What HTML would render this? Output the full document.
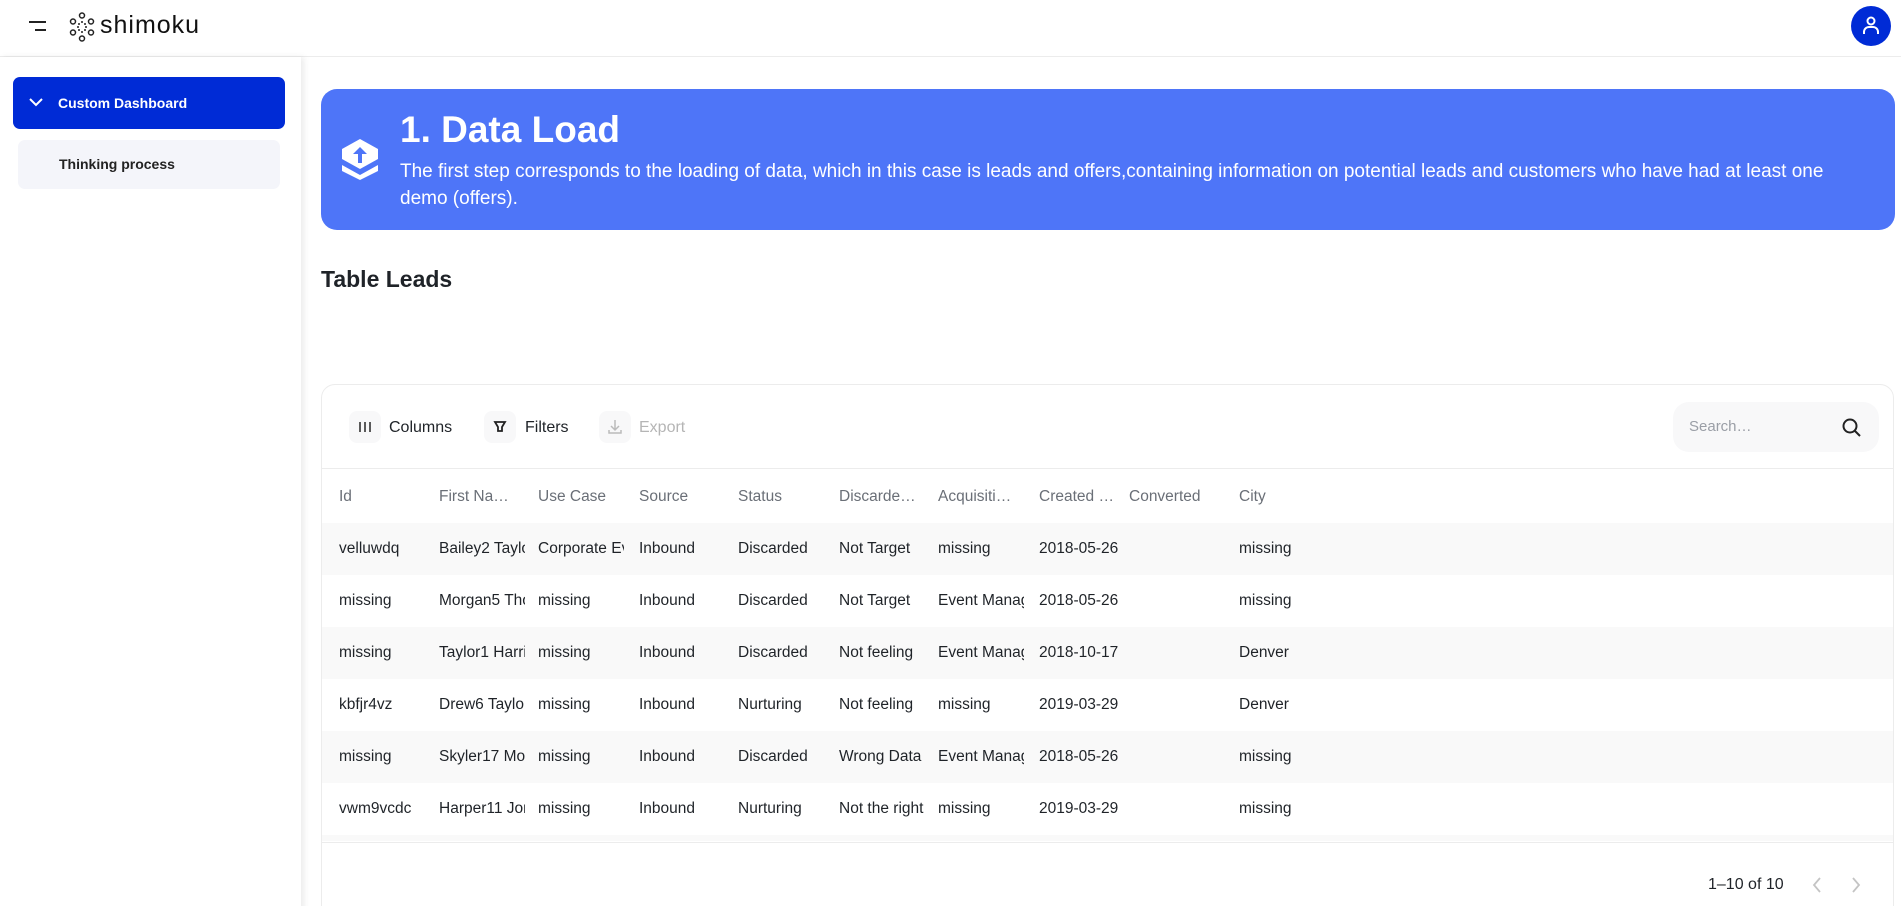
<!DOCTYPE html>
<html><head><meta charset="utf-8"><style>
*{margin:0;padding:0;box-sizing:border-box}
html,body{width:1901px;height:906px;overflow:hidden}
body{background:#fff;font-family:"Liberation Sans",sans-serif;color:#1f2328;position:relative}
.a{position:absolute}
.hdr{left:0;top:0;width:1901px;height:57px;border-bottom:1px solid #ececec;background:#fff}
.side{left:0;top:57px;width:301px;height:860px;background:#fff;box-shadow:3px 0 6px rgba(0,0,0,0.08)}
.cd{left:13px;top:77px;width:272px;height:52px;background:#002bd6;border-radius:7px;color:#fff;font-weight:bold;font-size:14px}
.tp{left:18px;top:140px;width:262px;height:49px;background:#f4f5fa;border-radius:7px;font-weight:bold;font-size:14px;color:#222}
.ban{left:321px;top:89px;width:1574px;height:141px;background:#4e75f8;border-radius:16px;color:#fff}
.card{left:321px;top:384px;width:1573px;height:540px;border:1px solid #ececec;border-radius:14px;background:#fff;overflow:hidden}
.ib{width:32px;height:32px;background:#f8f8f9;border-radius:8px;top:26px}
.tl{font-size:16px;top:34px;color:#1f2328}
.row{left:0;width:1573px;height:52px}
.row span{position:absolute;top:17px;font-size:15.5px;white-space:nowrap;overflow:hidden}
.g{background:#f9f9f9}
</style></head><body>
<div class="a hdr">
 <div class="a" style="left:29px;top:21px;width:17px;height:2px;background:#222"></div>
 <div class="a" style="left:35px;top:29px;width:11px;height:2px;background:#222"></div>
 <svg class="a" style="left:68px;top:12px" width="30" height="30" viewBox="0 0 30 30" fill="none" stroke="#222" stroke-width="1.5">
  <circle cx="14" cy="3.5" r="2.5"/><circle cx="14" cy="26.5" r="2.5"/><circle cx="5" cy="9.5" r="2.5"/><circle cx="5" cy="20.5" r="2.5"/><circle cx="23" cy="9.5" r="2.5"/><circle cx="23" cy="20.5" r="2.5"/>
  <g fill="#222" stroke="none"><circle cx="11" cy="12" r="1"/><circle cx="17" cy="12" r="1"/><circle cx="11" cy="18" r="1"/><circle cx="17" cy="18" r="1"/><circle cx="14" cy="10" r="1"/><circle cx="14" cy="20" r="1"/><circle cx="10" cy="15" r="1"/><circle cx="18" cy="15" r="1"/></g>
 </svg>
 <div class="a" style="left:100px;top:11px;font-size:25px;color:#111;letter-spacing:1px">shimoku</div>
 <div class="a" style="left:1851px;top:6px;width:40px;height:40px;border-radius:50%;background:#002bd6">
  <svg width="40" height="40" viewBox="0 0 40 40" fill="none" stroke="#fff" stroke-width="2"><circle cx="20" cy="15" r="3.5"/><path d="M13 28v-2a5 5 0 0 1 5-5h4a5 5 0 0 1 5 5v2"/></svg>
 </div>
</div>
<div class="a side"></div>
<div class="a cd"><svg class="a" style="left:16px;top:20px" width="14" height="10" viewBox="0 0 14 10" fill="none" stroke="#fff" stroke-width="2"><path d="M1 2l6 6 6-6"/></svg><span class="a" style="left:45px;top:18px">Custom Dashboard</span></div>
<div class="a tp"><span class="a" style="left:41px;top:16px">Thinking process</span></div>
<div class="a ban">
 <svg class="a" style="left:20px;top:50px" width="38" height="41" viewBox="0 0 38 41"><path fill="#fff" d="M19 0L37 10v10L19 30 1 20V10z"/><path fill="#fff" d="M1 26l18 10 18-10v6L19 41 1 32z"/><path d="M19 8l-7 7h5v9h4v-9h5z" fill="#4e75f8"/></svg>
 <div class="a" style="left:79px;top:20px;font-size:37px;font-weight:bold">1. Data Load</div>
 <div class="a" style="left:79px;top:69px;width:1450px;font-size:19px;line-height:27px">The first step corresponds to the loading of data, which in this case is leads and offers,containing information on potential leads and customers who have had at least one demo (offers).</div>
</div>
<div class="a" style="left:321px;top:266px;font-size:23px;font-weight:bold;color:#1f2328">Table Leads</div>
<div class="a card">
 <div class="a ib" style="left:27px"><svg width="32" height="32"><g stroke="#333" stroke-width="1.6"><path d="M11 11v10M16 11v10M21 11v10"/></g></svg></div>
 <div class="a tl" style="left:67px">Columns</div>
 <div class="a ib" style="left:162px"><svg width="32" height="32" fill="none" stroke="#222" stroke-width="1.8"><path d="M11 11h10l-3 5v4h-4v-4z"/></svg></div>
 <div class="a tl" style="left:203px">Filters</div>
 <div class="a ib" style="left:277px"><svg width="32" height="32" fill="none" stroke="#bbb" stroke-width="1.5"><path d="M16 9v10M12 15l4 4 4-4M10 19v3h12v-3"/></svg></div>
 <div class="a tl" style="left:317px;color:#b5b5b5">Export</div>
 <div class="a" style="left:1351px;top:17px;width:206px;height:50px;background:#f8f8f9;border-radius:16px">
  <span class="a" style="left:16px;top:16px;font-size:15px;color:#9a9ea6">Search…</span>
  <svg class="a" style="left:168px;top:15px" width="22" height="22" fill="none" stroke="#222" stroke-width="2"><circle cx="9" cy="9" r="6.5"/><path d="M14 14l5 5"/></svg>
 </div>
 <div class="a" style="left:0;top:83px;width:1573px;height:1px;background:#ececec"></div>
 <div class="a row" style="top:86px;color:#6a6f77"><span style="left:17px">Id</span><span style="left:117px">First Na…</span><span style="left:216px">Use Case</span><span style="left:317px">Source</span><span style="left:416px">Status</span><span style="left:517px">Discarde…</span><span style="left:616px">Acquisiti…</span><span style="left:717px">Created …</span><span style="left:807px">Converted</span><span style="left:917px">City</span></div>
 <div class="a row g" style="top:138px"><span style="left:17px">velluwdq</span><span style="left:117px;width:86px">Bailey2 Taylor</span><span style="left:216px;width:86px">Corporate Events</span><span style="left:317px">Inbound</span><span style="left:416px">Discarded</span><span style="left:517px;width:86px">Not Target</span><span style="left:616px">missing</span><span style="left:717px;width:86px">2018-05-26</span><span style="left:917px">missing</span></div>
 <div class="a row" style="top:190px"><span style="left:17px">missing</span><span style="left:117px;width:86px">Morgan5 Thomas</span><span style="left:216px">missing</span><span style="left:317px">Inbound</span><span style="left:416px">Discarded</span><span style="left:517px;width:86px">Not Target</span><span style="left:616px;width:86px">Event Manager</span><span style="left:717px;width:86px">2018-05-26</span><span style="left:917px">missing</span></div>
 <div class="a row g" style="top:242px"><span style="left:17px">missing</span><span style="left:117px;width:86px">Taylor1 Harris</span><span style="left:216px">missing</span><span style="left:317px">Inbound</span><span style="left:416px">Discarded</span><span style="left:517px;width:86px">Not feeling</span><span style="left:616px;width:86px">Event Manager</span><span style="left:717px;width:86px">2018-10-17</span><span style="left:917px">Denver</span></div>
 <div class="a row" style="top:294px"><span style="left:17px">kbfjr4vz</span><span style="left:117px;width:86px">Drew6 Taylor</span><span style="left:216px">missing</span><span style="left:317px">Inbound</span><span style="left:416px">Nurturing</span><span style="left:517px;width:86px">Not feeling</span><span style="left:616px">missing</span><span style="left:717px;width:86px">2019-03-29</span><span style="left:917px">Denver</span></div>
 <div class="a row g" style="top:346px"><span style="left:17px">missing</span><span style="left:117px;width:86px">Skyler17 Moore</span><span style="left:216px">missing</span><span style="left:317px">Inbound</span><span style="left:416px">Discarded</span><span style="left:517px;width:86px">Wrong Data</span><span style="left:616px;width:86px">Event Manager</span><span style="left:717px;width:86px">2018-05-26</span><span style="left:917px">missing</span></div>
 <div class="a row" style="top:398px"><span style="left:17px;width:86px">vwm9vcdc</span><span style="left:117px;width:86px">Harper11 Jones</span><span style="left:216px">missing</span><span style="left:317px">Inbound</span><span style="left:416px">Nurturing</span><span style="left:517px;width:86px">Not the right</span><span style="left:616px">missing</span><span style="left:717px;width:86px">2019-03-29</span><span style="left:917px">missing</span></div>
 <div class="a row g" style="top:450px;height:6px"></div>
 <div class="a" style="left:0;top:457px;width:1573px;height:1px;background:#ececec"></div>
 <div class="a" style="left:1386px;top:491px;font-size:16px;color:#1f2328">1–10 of 10</div>
 <svg class="a" style="left:1488px;top:491px" width="14" height="18" fill="none" stroke="#c4c4c4" stroke-width="1.8"><path d="M10 2l-6 7 6 7"/></svg>
 <svg class="a" style="left:1527px;top:491px" width="14" height="18" fill="none" stroke="#c4c4c4" stroke-width="1.8"><path d="M4 2l6 7-6 7"/></svg>
</div>
</body></html>
